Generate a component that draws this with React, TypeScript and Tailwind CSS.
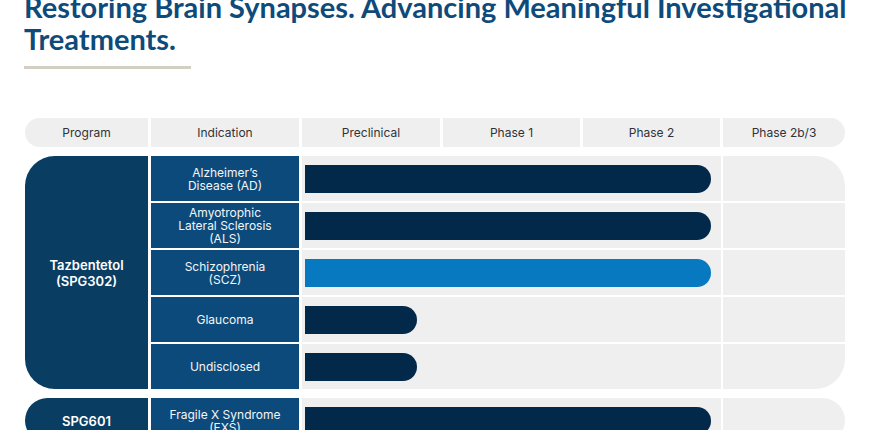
import React from 'react';

type Row = { label: string[]; bar: 'navy' | 'blue'; width: number };

const TAZ_ROWS: Row[] = [
  { label: ["Alzheimer’s", 'Disease (AD)'], bar: 'navy', width: 406 },
  { label: ['Amyotrophic', 'Lateral Sclerosis', '(ALS)'], bar: 'navy', width: 406 },
  { label: ['Schizophrenia', '(SCZ)'], bar: 'blue', width: 406 },
  { label: ['Glaucoma'], bar: 'navy', width: 112 },
  { label: ['Undisclosed'], bar: 'navy', width: 112 },
];

const SPG_ROWS: Row[] = [{ label: ['Fragile X Syndrome', '(FXS)'], bar: 'navy', width: 406 }];

const HEADERS = ['Program', 'Indication', 'Preclinical', 'Phase 1', 'Phase 2', 'Phase 2b/3'];

export default function App() {
  return (
    <div className="h-screen w-full overflow-hidden bg-white pl-[24px]" style={{ fontFamily: 'Inter, "Noto Sans", sans-serif' }}>
      <h1
        className="mt-[-9px] whitespace-nowrap text-[29px] font-bold leading-[32px] text-[#0e4a7a]"
        style={{ fontFamily: 'Lato, "Liberation Sans", sans-serif' }}
      >
        Restoring Brain Synapses. Advancing Meaningful Investigational
        <br />
        Treatments.
      </h1>
      <div className="mt-[11px] h-[3px] w-[167px] bg-[#d3cfc3]" />

      <div className="ml-[1px] mt-[49px] w-[820px]">
        <div className="grid h-[29px] grid-cols-[123px_148px_138px_137px_137px_122px] gap-x-[3px]">
          {HEADERS.map((h, i) => (
            <div
              key={h}
              className={`flex items-center justify-center bg-[#efefef] text-[12px] text-[#2f3338] ${
                i === 0 ? 'rounded-l-full' : ''
              } ${i === HEADERS.length - 1 ? 'rounded-r-full' : ''}`}
            >
              {h}
            </div>
          ))}
        </div>

        <ProgramBlock className="mt-[9px]" name={['Tazbentetol', '(SPG302)']} rows={TAZ_ROWS} />
        <ProgramBlock className="mt-[9px]" name={['SPG601']} rows={SPG_ROWS} />
      </div>
    </div>
  );
}

function ProgramBlock({ name, rows, className }: { name: string[]; rows: Row[]; className?: string }) {
  return (
    <div className={`flex gap-x-[3px] ${className ?? ''}`}>
      <div className="flex w-[123px] shrink-0 flex-col items-center justify-center rounded-l-[30px] bg-[#0a3d62] text-center text-[13px] font-semibold leading-[16px] text-white">
        {name.map((n) => (
          <div key={n}>{n}</div>
        ))}
      </div>
      <div className="flex w-[148px] shrink-0 flex-col gap-y-[2px]">
        {rows.map((r) => (
          <div
            key={r.label.join(' ')}
            className="flex h-[45px] flex-col items-center justify-center bg-[#0d4a7c] text-center text-[12px] leading-[13px] text-[#f4f6f8]"
          >
            {r.label.map((l) => (
              <div key={l}>{l}</div>
            ))}
          </div>
        ))}
      </div>
      <div className="flex flex-1 flex-col gap-y-[2px] overflow-hidden rounded-r-[30px]">
        {rows.map((r) => (
          <div key={r.label.join(' ')} className="flex h-[45px] gap-x-[2px]">
            <div className="flex w-[419px] shrink-0 items-center bg-[#efefef] pl-[3px]">
              <div
                className={`h-[28px] rounded-l-[2px] rounded-r-full ${r.bar === 'blue' ? 'bg-[#0779c1]' : 'bg-[#03294a]'}`}
                style={{ width: r.width }}
              />
            </div>
            <div className="flex-1 bg-[#efefef]" />
          </div>
        ))}
      </div>
    </div>
  );
}
